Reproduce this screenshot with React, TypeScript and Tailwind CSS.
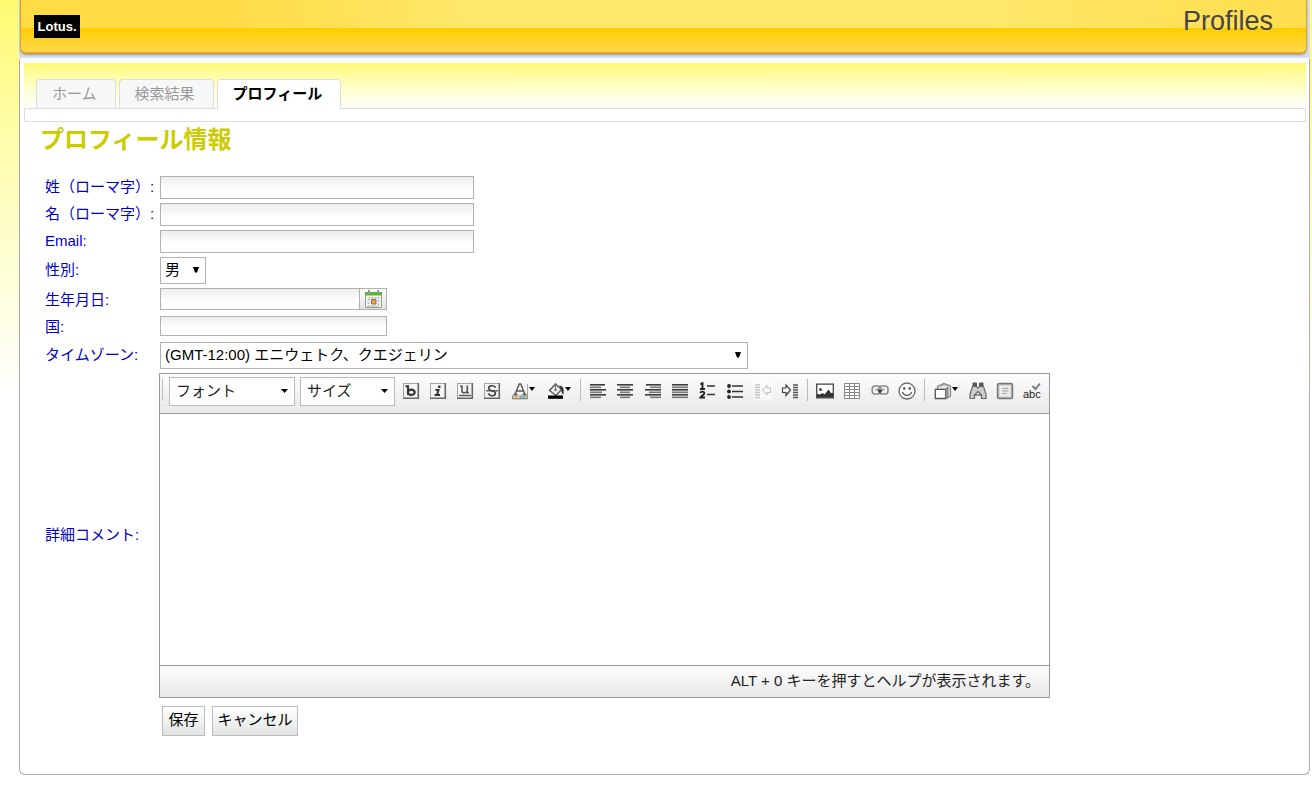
import React, { useState } from "react";
import clsx from "clsx";

const fieldClass =
  "ml-px block border border-[#b2b2b2] bg-linear-to-b from-[#ececec] to-white to-60% px-1 outline-none";

const DownArrow = () => (
  <svg width="7" height="4" viewBox="0 0 7 4" aria-hidden="true">
    <path d="M0 0h7L3.5 4z" fill="#000" />
  </svg>
);

type RowProps = {
  id: string;
  label: string;
  className?: string;
  children: React.ReactNode;
};

const Row = ({ id, label, className, children }: RowProps) => (
  <div className={clsx("flex", className)}>
    <label htmlFor={id} className="flex w-[114px] shrink-0 items-center pb-px whitespace-nowrap text-[#0000cc]">
      {label}
    </label>
    {children}
  </div>
);

type SelectProps = {
  id: string;
  options: string[];
  className: string;
};

const FieldSelect = ({ id, options, className }: SelectProps) => (
  <div className={clsx("relative ml-px", className)}>
    <select
      id={id}
      className="h-[27px] w-full appearance-none border border-[#b2b2b2] bg-white px-1 pb-[2px] outline-none"
    >
      {options.map((o) => (
        <option key={o}>{o}</option>
      ))}
    </select>
    <svg
      className="pointer-events-none absolute top-[10px] right-[7px]"
      width="6"
      height="6"
      viewBox="0 0 6 6"
      aria-hidden="true"
    >
      <path d="M0 0h6L4 5.500H2z" fill="#000" />
    </svg>
  </div>
);

const ToolbarCombo = ({ label, className }: { label: string; className: string }) => (
  <button
    type="button"
    className={clsx(
      "flex h-[29px] shrink-0 items-center justify-between border border-[#bbb] bg-white px-[6px] pb-px text-[#222]",
      className
    )}
  >
    {label}
    <DownArrow />
  </button>
);

const Separator = () => <span className="mx-[3px] mt-[2px] h-[22px] w-px shrink-0 self-start bg-[#bbb]" />;

type ToolProps = {
  title: string;
  menu?: boolean;
  children: React.ReactNode;
};

const Tool = ({ title, menu, children }: ToolProps) => (
  <button
    type="button"
    title={title}
    aria-label={title}
    className={clsx("flex h-6 items-center justify-center", menu ? "w-9 shrink-0" : "flex-1")}
  >
    <svg width="18" height="18" viewBox="0 0 18 18" fill="none" className="shrink-0" aria-hidden="true">
      {children}
    </svg>
    {menu && (
      <svg width="6" height="4" viewBox="0 0 6 4" className="mb-[4px] shrink-0" aria-hidden="true">
        <path d="M0 0h6L3 4z" fill="#000" />
      </svg>
    )}
  </button>
);

const Box = () => (
  <>
    <rect x="1.5" y="1.5" width="15" height="15" fill="#f4f4f4" stroke="#a5a5a5" />
    <path d="M1 16.2h15.3V1" stroke="#666" strokeWidth="1.6" />
  </>
);

const Lines = ({ rows }: { rows: number[][] }) => (
  <>
    {rows.map(([x, w], i) => (
      <rect key={i} x={x} y={2 + i * 2.5} width={w} height="1.6" fill={i % 2 ? "#777" : "#3c3c3c"} />
    ))}
  </>
);

const Dashes = ({ x, color }: { x: number; color: string }) => (
  <path
    d={`M${x} 3h5M${x} 5.5h5M${x} 8h5M${x} 10.5h5M${x} 13h5M${x} 15.5h5`}
    stroke={color}
    strokeWidth="1.4"
  />
);

const Toolbar = () => (
  <div className="flex h-10 items-start border-b border-[#999] bg-linear-to-b from-[#fdfdfd] to-[#e8e8e8] pt-[3px]">
    <span className="mt-[2px] mr-[6px] ml-[2px] h-[22px] w-px shrink-0 bg-[#bbb]" />
    <ToolbarCombo label="フォント" className="w-[126px]" />
    <ToolbarCombo label="サイズ" className="mr-[2px] ml-[5px] w-[95px]" />
    <div className="flex h-[27px] items-center">
      <div className="flex w-[108px]">
        <Tool title="太字">
          <Box />
          <path d="M3.500 4.300H6V13" stroke="#333" strokeWidth="2" />
          <ellipse cx="9.300" cy="10.200" rx="3.400" ry="2.600" stroke="#333" strokeWidth="2.200" />
        </Tool>
        <Tool title="斜体">
          <Box />
          <circle cx="10.300" cy="4.800" r="1.400" fill="#333" />
          <path d="M6.500 8h3L8 13h3M5.500 13H8" stroke="#333" strokeWidth="2" />
        </Tool>
        <Tool title="下線">
          <Box />
          <path d="M4 4.200h2V9q0 1.800 2.200 1.800T11.300 9V3.500v7.300h1.700" stroke="#555" strokeWidth="1.600" />
          <path d="M3 13.500h12" stroke="#555" strokeWidth="1.400" />
        </Tool>
        <Tool title="取り消し線">
          <Box />
          <path
            d="M12.500 5.800C12 4.300 10.500 3.800 9 3.800c-2 0-3.300.9-3.300 2.400C5.700 9.500 12.400 8 12.400 11.300c0 1.500-1.400 2.400-3.300 2.400-1.700 0-3.200-.6-3.600-2.300"
            stroke="#444"
            strokeWidth="1.600"
          />
          <path d="M3 8.800h12" stroke="#444" strokeWidth="1.200" />
        </Tool>
      </div>
      <Tool title="文字色" menu>
        <path d="M16.500 2v15H1" stroke="#aaa" />
        <path d="M4 12.500 8.300 2h1.400L14 12.500M5.500 9h7M2.500 12.500h4M11.500 12.500h4" stroke="#555" strokeWidth="1.400" />
        <path d="M1 13.500h16V17H1z" fill="#8a8a8a" />
        <path d="M2 14.200h3V16H2z" fill="#f2cf6b" />
        <path d="M5.700 14.200h3V16h-3z" fill="#f3e77e" />
        <path d="M9.400 14.200h3V16h-3z" fill="#7fc3ee" />
        <path d="M13.100 14.200h3V16h-3z" fill="#a8d66f" />
      </Tool>
      <Tool title="背景色" menu>
        <path d="M2.500 8.500 8.500 2l6 5.500-5.500 6z" fill="#eee" stroke="#555" strokeWidth="1.300" />
        <path d="M8.500 1v6.500" stroke="#777" strokeWidth="1.200" />
        <circle cx="8.500" cy="8" r="1.200" fill="#777" />
        <path d="M12 3.500c4 .5 5.300 2.500 4.500 9-1.800-.5-2-2.500-2.300-5z" fill="#333" />
        <path d="M1 13.500h15v3.300H1z" fill="#000" />
      </Tool>
      <Separator />
      <div className="flex w-[220px]">
        <Tool title="左揃え">
          <Lines rows={[[1, 15], [1, 11], [1, 16], [1, 12], [1, 16], [1, 11]]} />
        </Tool>
        <Tool title="中央揃え">
          <Lines rows={[[1, 16], [4, 10], [1, 16], [4, 10], [1, 16], [4, 10]]} />
        </Tool>
        <Tool title="右揃え">
          <Lines rows={[[2, 15], [6, 11], [1, 16], [5, 12], [1, 16], [6, 11]]} />
        </Tool>
        <Tool title="両端揃え">
          <Lines rows={[[1, 16], [1, 16], [1, 16], [1, 16], [1, 16], [1, 16]]} />
        </Tool>
        <Tool title="番号付きリスト">
          <path d="M1.500 2.500 3.500 1v6M1 7h5" stroke="#222" strokeWidth="1.900" />
          <path d="M1.300 11c.5-2 4.300-1.700 4 .3-.2 1.400-2.500 2.200-3.800 4.200H6" stroke="#222" strokeWidth="1.900" />
          <path d="M8 4h8M8 12.500h8" stroke="#333" strokeWidth="1.300" />
        </Tool>
        <Tool title="箇条書き">
          <circle cx="3" cy="4" r="1.900" fill="#222" />
          <circle cx="3" cy="9.500" r="1.900" fill="#222" />
          <circle cx="3" cy="15" r="1.900" fill="#222" />
          <path d="M6 4h11M6 9.500h11M6 15h11" stroke="#333" strokeWidth="1.500" />
        </Tool>
        <Tool title="インデント解除">
          <path d="M0 0h18v18H0z" fill="#fff" opacity=".5" />
          <Dashes x={1} color="#c2c2c2" />
          <path d="M8.500 8 13 3.500V6h3.500v4.500H13V13z" stroke="#bbb" />
        </Tool>
        <Tool title="インデント">
          <Dashes x={12} color="#555" />
          <path d="M9.500 8 5 3V6H1.500v4.500H5v3z" stroke="#444" strokeWidth="1.200" />
        </Tool>
      </div>
      <Separator />
      <div className="flex w-[110px]">
        <Tool title="イメージ">
          <path d="M.7 2.200h16.600v13.600H.7z" fill="#fff" stroke="#444" strokeWidth="1.300" />
          <circle cx="4.500" cy="7.500" r="1.500" fill="#444" />
          <path d="M1 15.500V12l3 .5L6.500 11l2 1.500 4-5 2.500 3.500h2v4.500z" fill="#333" />
        </Tool>
        <Tool title="表">
          <path
            d="M1.500 1.500h15v15h-15zM6.500 1.500v15M11.500 1.500v15M1.500 4.500h15M1.500 7.500h15M1.500 10.500h15M1.500 13.500h15"
            fill="#fff"
            stroke="#888"
          />
        </Tool>
        <Tool title="リンク">
          <rect x="1.200" y="4" width="8.500" height="8" rx="3" stroke="#888" strokeWidth="1.600" />
          <rect x="8" y="4" width="9" height="8" rx="3" stroke="#888" strokeWidth="1.600" />
          <path d="M4.500 7.500h9" stroke="#999" strokeWidth="1.800" />
          <path d="M6.500 8h5L9 11.500z" fill="#333" />
        </Tool>
        <Tool title="絵文字">
          <circle cx="9" cy="9" r="8" fill="#fafafa" stroke="#666" strokeWidth="1.300" />
          <circle cx="6.200" cy="6.500" r="1.200" fill="#444" />
          <circle cx="11.800" cy="6.500" r="1.200" fill="#444" />
          <path d="M4.500 10c1.500 4.500 7.500 4.500 9 0" stroke="#555" strokeWidth="1.200" />
        </Tool>
      </div>
      <Separator />
      <Tool title="貼り付け" menu>
        <path d="M3.500 7V4.500L10 1.500l6.500 2.500v10L13 16.500" fill="#ddd" stroke="#888" strokeWidth="1.200" />
        <path d="M7 4.500 8.500 3h4l1.500 1.500" fill="#fff" stroke="#888" />
        <path d="M1.300 7.300h10.500v9.200H1.300z" fill="#fff" stroke="#555" strokeWidth="1.300" />
        <path d="m11.800 7.300 2-2v9l-2 2" stroke="#666" />
      </Tool>
      <div className="flex w-[82px]">
        <Tool title="検索">
          <path d="M4 1h3.500v3H4zM10.500 1H14v3h-3.500z" fill="#555" stroke="#555" />
          <path
            d="M3.500 4.500h4L9 6l1.500-1.500h4L17 12v4.500h-4.500V13L9 9.500 5.500 13v3.500H1V12z"
            fill="#ccc"
            stroke="#666"
            strokeWidth="1.200"
          />
          <path d="M6 13h6" stroke="#555" strokeWidth="1.200" />
        </Tool>
        <Tool title="最大化">
          <rect x="1.500" y="1.500" width="15" height="15" rx="1.500" fill="#bbb" stroke="#777" strokeWidth="1.400" />
          <rect x="4" y="4" width="10" height="10" fill="#e4e4e4" stroke="#fafafa" />
          <path d="M6.500 6.500H12M6.500 9H12M6.500 11.500H10" stroke="#aaa" />
        </Tool>
        <Tool title="スペルチェック">
          <path d="m9.500 4 3 3L17 1.500" stroke="#777" strokeWidth="1.900" />
          <text x="0" y="16" fill="#222" className="font-['Liberation_Sans'] text-[11px]">
            abc
          </text>
        </Tool>
      </div>
    </div>
  </div>
);

const CalendarIcon = () => (
  <svg width="19" height="19" viewBox="0 0 19 19" fill="none" aria-hidden="true">
    <path d="M1.500 2.500h16v15h-16z" fill="#f6f6f6" stroke="#8fa08f" />
    <path d="M1 2h17v3.500H1z" fill="#5db536" />
    <path d="M5 0v3.500M14 0v3.500" stroke="#999" strokeWidth="2" />
    <path d="M4.500 8h10v8h-10z" stroke="#c4c4c4" strokeDasharray="2 1" strokeWidth="2" />
    <path d="M7.500 9.500h4.500V14H7.500z" fill="#e9a03c" stroke="#a8684a" />
  </svg>
);

const tabs = ["ホーム", "検索結果", "プロフィール"];

const App = () => {
  const [activeTab, setActiveTab] = useState("プロフィール");

  return (
    <div className="min-h-screen bg-white bg-linear-to-b from-[#fffa70] to-white to-[400px] pr-[2px] pb-[10px] pl-[19px] font-['Liberation_Sans','Noto_Sans_CJK_JP',sans-serif] text-[15px] leading-5 text-black">
      <div className="bg-white">
        <div className="bg-[#d5dfef] pr-[3px] pb-[4px] pl-px">
          <header className="flex h-[54px] justify-between rounded-b-md border-x border-b-2 border-[#dfa51c] bg-[linear-gradient(to_bottom,transparent_28px,#ffcc00_28px,#ffd94f_52px),linear-gradient(to_right,#ffdb45_15%,#ffe76b_35%,#ffe76b_75%,#ffdd4d)] pr-[33px] pl-[13px] shadow-[0_1px_2px_#8899bb]">
            <div className="mt-[15px] flex h-[23px] w-[46px] items-center justify-center bg-black text-[13px] font-bold text-white">
              Lotus.
            </div>
            <h1 className="mt-[5px] text-[27px] leading-8 text-[#444]">Profiles</h1>
          </header>
        </div>
        <main className="mt-px rounded-b-md border-x border-b border-[#aaa] bg-white pt-[4px] pr-[3px] pb-[38px] pl-[4px]">
          <nav className="flex h-[45px] items-end gap-[3px] bg-linear-to-b from-[#fffa75] to-white pl-3">
            {tabs.map((t) => (
              <button
                key={t}
                type="button"
                onClick={() => setActiveTab(t)}
                className={clsx(
                  "rounded-t-[4px] border border-b-0 border-[#ddd] pr-[18px] pl-[15px]",
                  t === activeTab
                    ? "relative -mb-px h-[30px] bg-white pb-px font-bold text-black"
                    : "h-[29px] bg-[#f7f7f7] text-[#999]"
                )}
              >
                {t}
              </button>
            ))}
          </nav>
          <div className="h-[14px] border border-[#ddd]" />
          <h2 className="mt-[2px] ml-4 text-2xl leading-8 font-bold text-[#cccc00]">プロフィール情報</h2>
          <form className="mt-5 ml-[21px] flex flex-col gap-1" onSubmit={(e) => e.preventDefault()}>
            <Row id="lastName" label="姓（ローマ字）:" className="h-[23px]">
              <input id="lastName" type="text" className={clsx(fieldClass, "h-[23px] w-[314px]")} />
            </Row>
            <Row id="firstName" label="名（ローマ字）:" className="h-[23px]">
              <input id="firstName" type="text" className={clsx(fieldClass, "h-[23px] w-[314px]")} />
            </Row>
            <Row id="email" label="Email:" className="h-[23px]">
              <input id="email" type="text" className={clsx(fieldClass, "h-[23px] w-[314px]")} />
            </Row>
            <Row id="gender" label="性別:" className="h-[27px]">
              <FieldSelect id="gender" options={["男", "女"]} className="w-[46px]" />
            </Row>
            <Row id="birthday" label="生年月日:" className="h-6">
              <input id="birthday" type="text" className={clsx(fieldClass, "h-[22px] w-[200px]")} />
              <button
                type="button"
                aria-label="カレンダー"
                className="flex h-[22px] w-[27px] items-center justify-center border border-l-0 border-[#b2b2b2] bg-linear-to-b from-white to-[#e2e2e2]"
              >
                <CalendarIcon />
              </button>
            </Row>
            <Row id="country" label="国:" className="h-[22px]">
              <input id="country" type="text" className={clsx(fieldClass, "h-5 w-[227px]")} />
            </Row>
            <Row id="timezone" label="タイムゾーン:" className="h-[27px]">
              <FieldSelect
                id="timezone"
                options={["(GMT-12:00) エニウェトク、クエジェリン"]}
                className="w-[588px]"
              />
            </Row>
            <Row id="comment" label="詳細コメント:">
              <div className="w-[891px] border border-[#999]">
                <Toolbar />
                <textarea id="comment" className="block h-[251px] w-full resize-none bg-white p-2 outline-none" />
                <div className="flex h-8 items-center justify-end border-t border-[#999] bg-linear-to-b from-[#fdfdfd] to-[#e8e8e8] pr-[9px] pb-[2px] text-[#222]">
                  ALT + 0 キーを押すとヘルプが表示されます。
                </div>
              </div>
            </Row>
            <div className="mt-1 ml-[117px] flex gap-[7px]">
              <button
                type="submit"
                className="h-[30px] w-[43px] border border-[#bbb] bg-linear-to-b from-white to-[#e2e4e3] pb-[2px]"
              >
                保存
              </button>
              <button
                type="button"
                className="h-[30px] w-[86px] border border-[#bbb] bg-linear-to-b from-white to-[#e2e4e3] pb-[2px]"
              >
                キャンセル
              </button>
            </div>
          </form>
        </main>
      </div>
    </div>
  );
};

export default App;
